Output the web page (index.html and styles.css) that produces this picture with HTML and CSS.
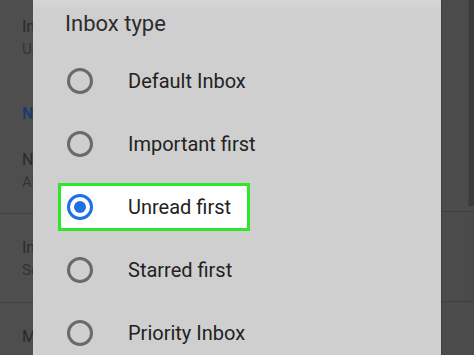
FILE: index.html
```html
<!DOCTYPE html>
<html lang="en">
<head>
    <meta charset="UTF-8">
    <meta name="viewport" content="width=device-width, initial-scale=1.0">
    <title>Inbox type</title>
    <link rel="stylesheet" href="styles.css">
</head>
<body>
    <div id="tela">
        <div class="fundo esq">
            <div class="item">
                <div class="linha">Inbox type</div>
                <div class="linha sub">Unread first</div>
            </div>
            <div class="linha secao">Notifications</div>
            <div class="item it2">
                <div class="linha">Notifications</div>
                <div class="linha sub">All</div>
            </div>
            <div class="div d1"></div>
            <div class="item it3">
                <div class="linha">Inbox notifications</div>
                <div class="linha sub">Sound only</div>
            </div>
            <div class="div d2"></div>
            <div class="linha it4">Manage labels</div>
        </div>

        <div id="dialogo">
            <div class="titulo">Inbox type</div>
            <div class="lista">
                <div class="row">
                    <div class="opt"><span class="radio"></span><span class="lbl">Default Inbox</span></div>
                </div>
                <div class="row">
                    <div class="opt"><span class="radio"></span><span class="lbl">Important first</span></div>
                </div>
                <div class="row">
                    <div class="opt sel"><span class="radio on"></span><span class="lbl">Unread first</span></div>
                </div>
                <div class="row">
                    <div class="opt"><span class="radio"></span><span class="lbl">Starred first</span></div>
                </div>
                <div class="row">
                    <div class="opt"><span class="radio"></span><span class="lbl">Priority Inbox</span></div>
                </div>
            </div>
        </div>

        <div class="fundo dir">
            <div class="topo">
                <div class="barra"></div>
            </div>
            <div class="hr"></div>
            <div class="meio"></div>
            <div class="hr"></div>
            <div class="resto"></div>
        </div>
    </div>
</body>
</html>
```

FILE: styles.css
```css
@charset "UTF-8";
*{
    border: none;
    padding: 0px;
    margin: 0px;
    box-sizing: border-box;
}
body{
    width: 474px;
    height: 355px;
    overflow: hidden;
    font-family: Roboto, "Liberation Sans", sans-serif;
    background-color: #4e4e4e;
}
#tela{
    display: flex;
    flex-direction: row;
    width: 474px;
    height: 355px;
}
.fundo{
    background-color: #4e4e4e;
    height: 355px;
}
.esq{
    width: 33px;
    overflow: hidden;
    white-space: nowrap;
    padding-top: 15px;
    padding-left: 22px;
    color: #2a2a2a;
}
.linha{
    font-size: 16px;
    line-height: 23px;
    height: 23px;
}
.esq .linha{
    width: 11px;
    overflow: hidden;
}
.sub{
    font-size: 15px;
    color: #333;
}
.secao{
    margin-top: 41px;
    color: #173a72;
    font-weight: 500;
}
.it2{
    margin-top: 23px;
}
.div{
    height: 1px;
    background-color: #424242;
    margin-left: -22px;
    width: 33px;
}
.d1{
    margin-top: 19px;
}
.it3{
    margin-top: 22px;
}
.d2{
    margin-top: 20px;
}
.it4{
    margin-top: 22px;
}
#dialogo{
    width: 408px;
    height: 355px;
    background: linear-gradient(#d6d6d6 0px, #d3d3d3 6px, #cfcfcf 8px, #cfcfcf 100%);
    padding-left: 25px;
}
.titulo{
    font-size: 22px;
    line-height: 26px;
    color: #2c2c2c;
    margin-top: 11px;
    margin-left: 7px;
}
.lista{
    margin-top: 12px;
    display: flex;
    flex-direction: column;
}
.row{
    height: 63px;
    display: flex;
    align-items: center;
}
.opt{
    display: flex;
    align-items: center;
    height: 48px;
    border: 3px solid transparent;
    padding-left: 6px;
    padding-right: 16px;
}
.sel{
    border-color: #2fe62f;
    background-color: #fff;
}
.radio{
    width: 26px;
    height: 26px;
    border-radius: 50%;
    border: 3px solid #6a6a6a;
    display: flex;
    align-items: center;
    justify-content: center;
}
.on{
    border-color: #1f6fe6;
}
.on::after{
    content: "";
    width: 12px;
    height: 12px;
    border-radius: 50%;
    background-color: #1f6fe6;
}
.lbl{
    margin-left: 35px;
    font-size: 20px;
    color: #222;
}
.dir{
    width: 33px;
    border-left: 1px solid #3e3e3e;
    display: flex;
    flex-direction: column;
    background-color: #4b4b4b;
}
.topo{
    height: 211px;
    display: flex;
    justify-content: flex-end;
}
.barra{
    width: 6px;
    height: 206px;
    background-color: #3a3a3a;
    border-left: 1px solid #444;
}
.hr{
    height: 1px;
    background-color: #3f3f3f;
}
.meio{
    height: 89px;
    border-right: 6px solid #4a4a4a;
}
.resto{
    flex: 1;
}
```
